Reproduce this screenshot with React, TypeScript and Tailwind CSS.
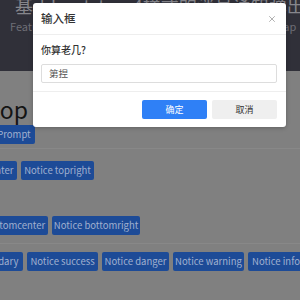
import { X } from 'lucide-react';

const btn =
  'h-[19px] shrink-0 rounded-[2px] bg-[#1d4b97] text-[9.5px] leading-[19px] text-center text-[#a0b0cf] whitespace-nowrap';

export default function App() {
  return (
    <div className="relative h-[300px] w-[300px] overflow-hidden bg-[#808080] font-['Noto_Sans_CJK_SC',sans-serif]">
      <header className="h-[71px] overflow-hidden bg-[#303039] pl-[15px]">
        <h1 className="-mt-[4px] whitespace-nowrap text-[18px] leading-[18px] text-[#86868c]">
          基于bootstrap4样式的消息通知弹出框组件
        </h1>
        <p className="-ml-[5px] mt-[7px] whitespace-nowrap text-[11px] leading-[11px] text-[#6e6e76]">
          Features a lightweight popup plugin based on bootstrap
        </p>
      </header>

      <main>
        <div className="mt-[23px] flex">
          <h2 className="-ml-[60px] w-[82px] shrink-0 text-right text-[23px] leading-[30px] text-[#141414]">Desktop</h2>
        </div>
        <div className="mt-[1px] flex">
          <button className={`${btn} -ml-[7px] w-[42px]`}>Prompt</button>
        </div>
        <div className="mt-[4px] border-t border-[#888888]" />

        <div className="mt-[12px] flex gap-1">
          <button className={`${btn} -ml-[64px] w-[81px]`}>Notice topcenter</button>
          <button className={`${btn} w-[73px]`}>Notice topright</button>
        </div>

        <div className="mt-[36px] flex gap-1">
          <button className={`${btn} -ml-[49px] w-[97px]`}>Notice bottomcenter</button>
          <button className={`${btn} w-[88px]`}>Notice bottomright</button>
        </div>
        <div className="mt-[8px] border-t border-[#888888]" />

        <div className="mt-[8px] flex gap-1">
          <button className={`${btn} -ml-[63px] w-[86px]`}>Notice secondary</button>
          <button className={`${btn} w-[71px]`}>Notice success</button>
          <button className={`${btn} w-[67px]`}>Notice danger</button>
          <button className={`${btn} w-[71px]`}>Notice warning</button>
          <button className={`${btn} w-[56px]`}>Notice info</button>
        </div>
      </main>

      {/* prompt dialog */}
      <div className="absolute left-[33px] top-[3px] w-[253px] rounded-[3px] bg-white shadow-[0_1px_4px_rgba(0,0,0,0.25)]">
        <div className="flex h-[32px] items-center justify-between border-b border-[#eeeeee] pl-[8px] pr-[9px]">
          <span className="text-[11.5px] font-medium text-[#333]">输入框</span>
          <X size={10} strokeWidth={1.6} className="text-[#8a8a8a]" />
        </div>
        <div className="px-[8px] pb-[8px] pt-[8px]">
          <label className="block text-[10px] font-medium leading-[14px] text-[#333]">你算老几?</label>
          <div className="mt-[7px] h-[19px] w-[236px] rounded-[2px] border border-[#dddddd] px-[7px] text-[9.5px] leading-[17px] text-[#555]">
            第捏
          </div>
        </div>
        <div className="flex justify-end gap-[5px] border-t border-[#eeeeee] pb-[8px] pr-[9px] pt-[8px]">
          <button className="h-[19px] w-[65px] rounded-[2px] bg-[#2f80f6] text-[9px] text-white">确定</button>
          <button className="h-[19px] w-[65px] rounded-[2px] bg-[#efefef] text-[9px] text-[#333]">取消</button>
        </div>
      </div>
    </div>
  );
}
